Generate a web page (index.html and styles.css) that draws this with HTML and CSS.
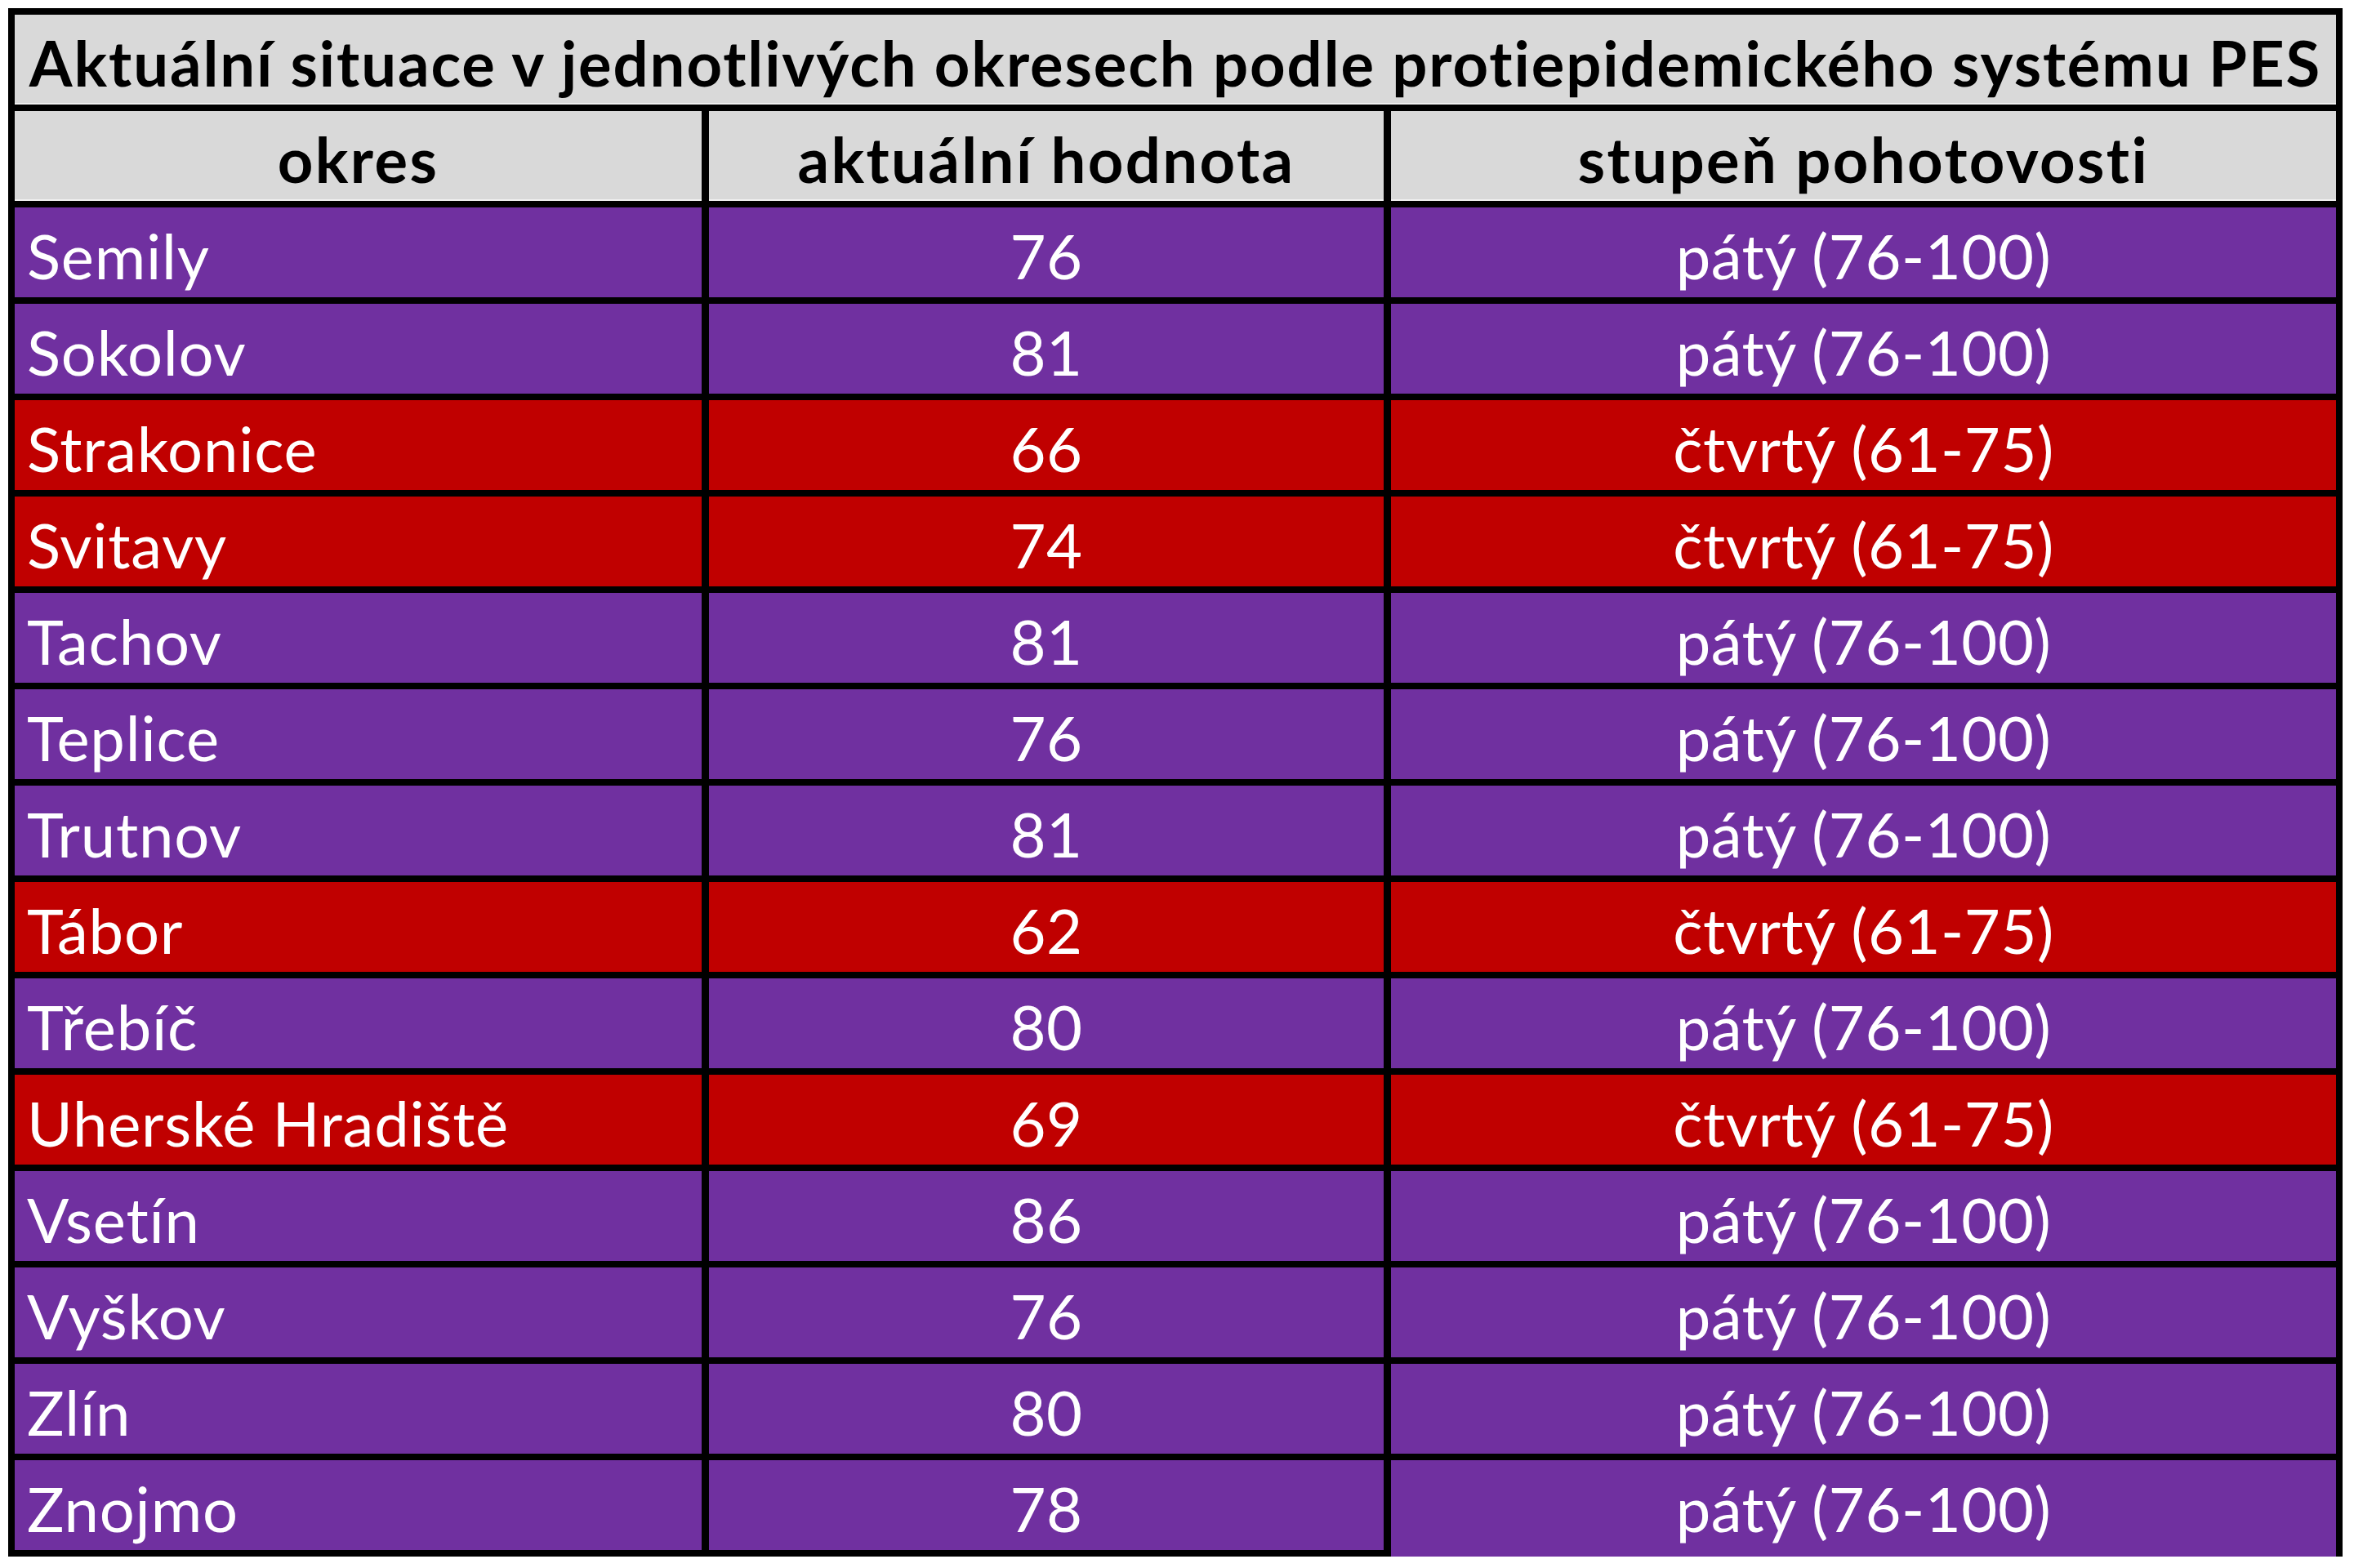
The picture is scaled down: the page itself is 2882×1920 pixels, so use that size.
FILE: index.html
```html
<!DOCTYPE html>
<html lang="cs">
<head>
<meta charset="utf-8">
<title>PES – okresy</title>
<link rel="stylesheet" href="styles.css">
</head>
<body>
<div class="sheet">
  <div class="cell title">Aktuální situace v jednotlivých okresech podle protiepidemického systému PES</div>
  <div class="cell head">okres</div>
  <div class="cell head">aktuální hodnota</div>
  <div class="cell head">stupeň pohotovosti</div>

  <div class="cell p name">Semily</div><div class="cell p num">76</div><div class="cell p num">pátý (76-100)</div>
  <div class="cell p name">Sokolov</div><div class="cell p num">81</div><div class="cell p num">pátý (76-100)</div>
  <div class="cell r name">Strakonice</div><div class="cell r num">66</div><div class="cell r num">čtvrtý (61-75)</div>
  <div class="cell r name">Svitavy</div><div class="cell r num">74</div><div class="cell r num">čtvrtý (61-75)</div>
  <div class="cell p name">Tachov</div><div class="cell p num">81</div><div class="cell p num">pátý (76-100)</div>
  <div class="cell p name">Teplice</div><div class="cell p num">76</div><div class="cell p num">pátý (76-100)</div>
  <div class="cell p name">Trutnov</div><div class="cell p num">81</div><div class="cell p num">pátý (76-100)</div>
  <div class="cell r name">Tábor</div><div class="cell r num">62</div><div class="cell r num">čtvrtý (61-75)</div>
  <div class="cell p name">Třebíč</div><div class="cell p num">80</div><div class="cell p num">pátý (76-100)</div>
  <div class="cell r name">Uherské Hradiště</div><div class="cell r num">69</div><div class="cell r num">čtvrtý (61-75)</div>
  <div class="cell p name">Vsetín</div><div class="cell p num">86</div><div class="cell p num">pátý (76-100)</div>
  <div class="cell p name">Vyškov</div><div class="cell p num">76</div><div class="cell p num">pátý (76-100)</div>
  <div class="cell p name">Zlín</div><div class="cell p num">80</div><div class="cell p num">pátý (76-100)</div>
  <div class="cell p name">Znojmo</div><div class="cell p num">78</div><div class="cell p num last">pátý (76-100)</div>
</div>
</body>
</html>
```

FILE: styles.css
```css
html, body {
  margin: 0;
  padding: 0;
  background: #ffffff;
}
body {
  padding: 10px 0 0 10px;
  font-family: Lato, "Open Sans", "Liberation Sans", sans-serif;
}
.sheet {
  display: grid;
  grid-template-columns: 841px 826px 1157px;
  grid-auto-rows: 110px;
  column-gap: 9px;
  row-gap: 8px;
  padding: 8px;
  width: max-content;
  background: #000;
}
.cell {
  box-sizing: border-box;
  height: 110px;
  padding-top: 8px;
  line-height: 102px;
  font-size: 76px;
  letter-spacing: 0.8px;
  font-variant-ligatures: none;
  white-space: nowrap;
  overflow: visible;
}
.num {
  text-align: center;
  letter-spacing: 0.5px;
}
.title {
  grid-column: 1 / 4;
  background: #d9d9d9;
  color: #000;
  font-weight: 700;
  letter-spacing: 1.9px;
  text-align: center;
  box-shadow: inset 0 -2px 0 #f0f0f0;
}
.head {
  background: #d9d9d9;
  color: #000;
  font-weight: 700;
  letter-spacing: 2.4px;
  text-align: center;
  box-shadow: inset 0 -2px 0 #f0f0f0;
}
.p {
  background: #7030a0;
  color: #fff;
}
.r {
  background: #c00000;
  color: #fff;
}
.name {
  padding-left: 15px;
}
.last {
  margin-bottom: -8px;
  height: 118px;
}
```
